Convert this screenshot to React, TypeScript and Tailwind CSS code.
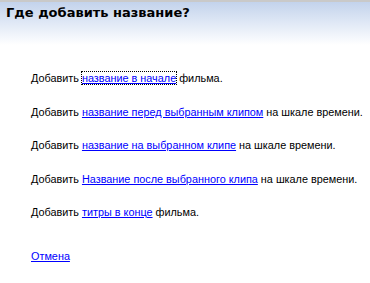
import React from 'react';

const rows: { pre: string; link: string; post: string; focused?: boolean }[] = [
  { pre: 'Добавить ', link: 'название в начале', post: ' фильма.', focused: true },
  { pre: 'Добавить ', link: 'название перед выбранным клипом', post: ' на шкале времени.' },
  { pre: 'Добавить ', link: 'название на выбранном клипе', post: ' на шкале времени.' },
  { pre: 'Добавить ', link: 'Название после выбранного клипа', post: ' на шкале времени.' },
  { pre: 'Добавить ', link: 'титры в конце', post: ' фильма.' },
];

const App: React.FC = () => {
  return (
    <div className="w-[370px] h-[283px] bg-white overflow-hidden font-['Liberation_Sans',sans-serif] text-black">
      <div className="h-[45px] border-t-2 border-[#c9c9c9] bg-gradient-to-b from-[#c3d3ec] to-white px-[6px] pt-[3px]">
        <h1 className="font-['DejaVu_Sans',sans-serif] text-[13px] font-bold leading-[16px]">Где добавить название?</h1>
      </div>
      <div className="pl-[31px] pt-[27px] text-[10.85px] leading-[13px]">
        {rows.map((r, i) => (
          <p key={i} className="h-[33.6px]">
            {r.pre}
            <a
              href="#"
              className={`text-[#0000ff] underline ${r.focused ? 'outline outline-1 outline-dotted outline-black' : ''}`}
            >
              {r.link}
            </a>
            {r.post}
          </p>
        ))}
        <a href="#" className="block mt-[10px] text-[#0000ff] underline">
          Отмена
        </a>
      </div>
    </div>
  );
};

export default App;
